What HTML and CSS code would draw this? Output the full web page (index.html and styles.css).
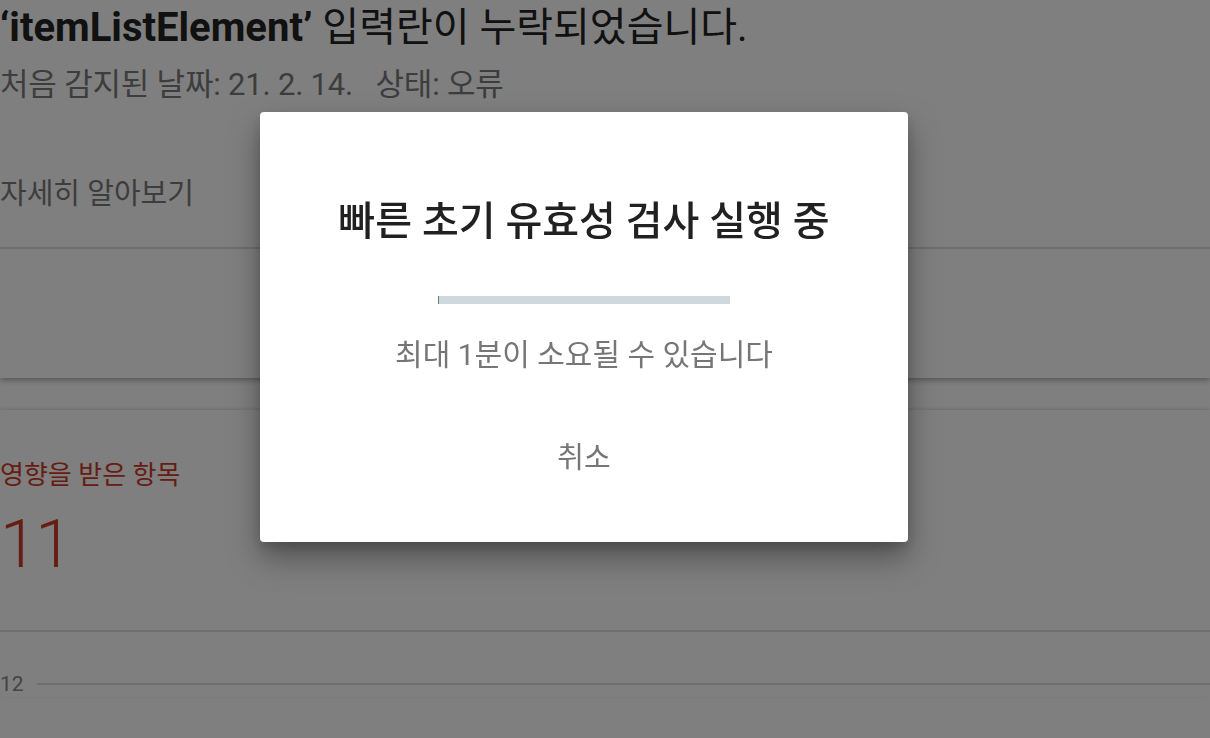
FILE: index.html
```html
<!DOCTYPE html>
<html lang="ko">
<head>
  <meta charset="UTF-8" />
  <meta name="viewport" content="width=device-width, initial-scale=1" />
  <title>유효성 검사</title>
  <link rel="stylesheet" href="styles.css">
</head>
<body>
  <div class="page">
    <div class="issue-card">
      <div class="issue-head">
        <h1><b>‘itemListElement’</b> 입력란이 누락되었습니다.</h1>
        <div class="issue-meta">처음 감지된 날짜: 21. 2. 14.&nbsp;&nbsp;&nbsp;상태: 오류</div>
      </div>
      <div class="learn-more">자세히 알아보기</div>
      <div class="issue-actions"></div>
    </div>

    <div class="stats-card">
      <div class="stat">
        <div class="stat-label">영향을 받은 항목</div>
        <div class="stat-value">11</div>
      </div>
      <div class="chart">
        <div class="chart-row">
          <span class="axis-label">12</span>
          <span class="grid-line"></span>
        </div>
      </div>
    </div>
  </div>

  <div class="scrim"></div>

  <div class="dialog">
    <h2>빠른 초기 유효성 검사 실행 중</h2>
    <div class="progress"><div class="progress-fill"></div></div>
    <p class="dialog-note">최대 1분이 소요될 수 있습니다</p>
    <button class="cancel">취소</button>
  </div>
</body>
</html>
```

FILE: styles.css
```css
:root {
  --text-dark: #222222;
  --text-muted: #7a7a7a;
  --red: #cc3b28;
  --divider: #dcdcdc;
}

body, html {
  margin: 0;
  padding: 0;
  height: 100%;
  overflow: hidden;
  background: #ffffff;
  font-family: Roboto, "Noto Sans CJK KR", sans-serif;
  color: var(--text-dark);
}

/* underlying report page */

.issue-card {
  background: #fff;
  box-shadow: 0 2px 6px rgba(0, 0, 0, 0.35);
  height: 378px;
  display: flex;
  flex-direction: column;
}

.issue-head {
  padding-top: 4px;
}

h1 {
  margin: 0;
  font-size: 40px;
  font-weight: 400;
  line-height: 48px;
  letter-spacing: 0;
  color: var(--text-dark);
  white-space: nowrap;
}

h1 b {
  font-weight: 700;
}

.issue-meta {
  margin-top: 15px;
  font-size: 31px;
  line-height: 36px;
  letter-spacing: -0.2px;
  color: var(--text-muted);
}

.learn-more {
  margin-top: 73px;
  font-size: 29px;
  line-height: 36px;
  color: var(--text-muted);
  padding-bottom: 35px;
  border-bottom: 2px solid var(--divider);
}

.stats-card {
  margin-top: 32px;
  background: #fff;
  box-shadow: 0 -1px 3px rgba(0, 0, 0, 0.15);
}

.stat {
  box-sizing: border-box;
  padding-top: 48px;
  height: 222px;
  border-bottom: 2px solid var(--divider);
}

.stat-label {
  font-size: 26px;
  line-height: 34px;
  color: var(--red);
}

.stat-value {
  margin-top: 16px;
  font-size: 67px;
  line-height: 72px;
  font-weight: 300;
  color: var(--red);
  letter-spacing: -2px;
}

.chart-row {
  display: flex;
  align-items: center;
  gap: 13px;
  margin-top: 39px;
}

.axis-label {
  font-size: 21px;
  line-height: 26px;
  color: #888;
}

.grid-line {
  flex: 1;
  height: 2px;
  background: var(--divider);
}

/* modal */

.scrim {
  position: fixed;
  inset: 0;
  background: rgba(0, 0, 0, 0.5);
}

.dialog {
  position: absolute;
  left: 260px;
  top: 112px;
  width: 648px;
  height: 430px;
  box-sizing: border-box;
  background: #fff;
  border-radius: 4px;
  box-shadow: 0 16px 32px rgba(0, 0, 0, 0.35), 0 6px 12px rgba(0, 0, 0, 0.15);
  display: flex;
  flex-direction: column;
  align-items: center;
  padding-top: 86px;
}

.dialog h2 {
  margin: 0;
  font-size: 40px;
  line-height: 48px;
  font-weight: 500;
  color: #212121;
}

.progress {
  margin-top: 50px;
  width: 292px;
  height: 8px;
  background: #cfd8dc;
}

.progress-fill {
  width: 1px;
  height: 100%;
  background: #607d8b;
}

.dialog-note {
  margin: 31px 0 0;
  font-size: 30px;
  line-height: 40px;
  color: #767676;
}

.cancel {
  margin-top: 65px;
  background: none;
  border: none;
  padding: 0;
  font-family: inherit;
  font-size: 29px;
  line-height: 36px;
  color: #767676;
  cursor: pointer;
}
```
